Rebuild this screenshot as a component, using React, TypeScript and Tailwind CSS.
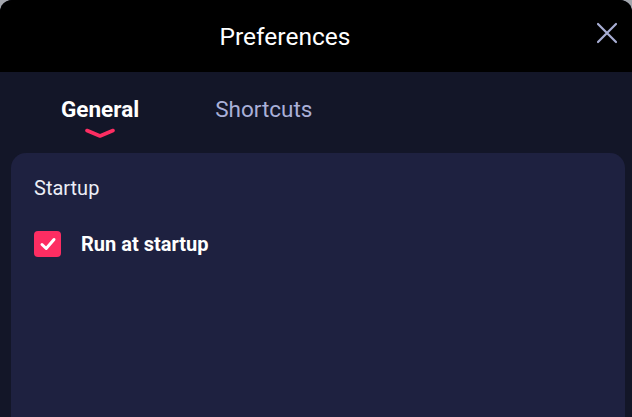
import { useState } from "react";

const TABS = ["General", "Shortcuts"];

export default function App() {
  const [tab, setTab] = useState("General");
  const [runAtStartup, setRunAtStartup] = useState(true);

  return (
    <div className="h-[417px] w-[632px] overflow-hidden bg-[#a3a6ad] font-['Roboto',sans-serif]">
      <div className="flex h-full flex-col overflow-hidden rounded-t-[12px] bg-[#131628]">
        <header className="relative flex h-[72px] shrink-0 items-center justify-center bg-black pr-[62px] pt-[3px]">
          <h1 className="text-[24.5px] text-white">Preferences</h1>
          <button className="absolute right-[14px] top-[22px] text-[#a8aed4]">
            <svg width="22" height="22" viewBox="0 0 22 22" fill="none">
              <path d="M2 2L20 20M20 2L2 20" stroke="currentColor" strokeWidth="2.2" strokeLinecap="round" />
            </svg>
          </button>
        </header>

        <nav className="flex h-[81px] shrink-0 items-start gap-[76px] pl-[61px] pt-[21px]">
          {TABS.map((t) => (
            <button
              key={t}
              onClick={() => setTab(t)}
              className={
                t === tab
                  ? "relative text-[22.5px] font-bold text-white"
                  : "relative text-[22.5px] text-[#aab0d8]"
              }
            >
              {t}
              {t === tab && (
                <svg
                  className="absolute left-1/2 top-[35px] -translate-x-1/2"
                  width="30"
                  height="10"
                  viewBox="0 0 30 10"
                  fill="none"
                >
                  <path d="M2 2.5L15 8L28 2.5" stroke="#fd2d62" strokeWidth="3.6" strokeLinecap="round" strokeLinejoin="round" />
                </svg>
              )}
            </button>
          ))}
        </nav>

        <section className="mx-[11px] mr-[7px] flex-1 rounded-t-[15px] bg-[#1e2140] px-[23px] pt-[20px]">
          <h2 className="text-[20px] text-[#eceef6]">Startup</h2>
          <label className="mt-[26px] flex cursor-pointer items-center gap-[20px]">
            <span
              onClick={() => setRunAtStartup(!runAtStartup)}
              className="flex h-[26px] w-[27px] items-center justify-center rounded-[4px] bg-[#fd2d62]"
            >
              {runAtStartup && (
                <svg width="18" height="18" viewBox="0 0 18 18" fill="none">
                  <path d="M3 9.5L7.2 13.5L15 4.5" stroke="white" strokeWidth="3" strokeLinecap="round" strokeLinejoin="round" />
                </svg>
              )}
            </span>
            <span className="text-[20px] font-bold text-white">Run at startup</span>
          </label>
        </section>
      </div>
    </div>
  );
}
